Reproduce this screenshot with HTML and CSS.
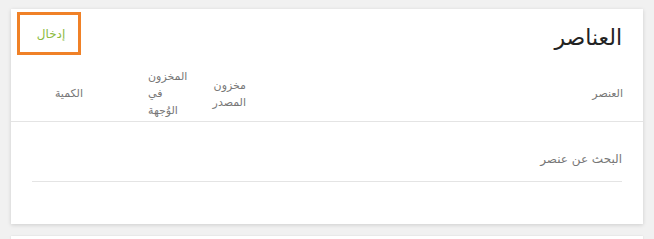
FILE: index.html
```html
<!DOCTYPE html>
<html lang="ar" dir="rtl">
<head>
    <meta charset="UTF-8">
    <title>العناصر</title>
    <link rel="stylesheet" href="styles.css">
</head>
<body>
    <div class="card">
        <div class="card-head">
            <h2 class="title">العناصر</h2>
            <button class="btn-enter">إدخال</button>
        </div>

        <div class="table-head">
            <div class="th col-item">العنصر</div>
            <div class="th col-src"><span>مخزون المصدر</span></div>
            <div class="th col-dst"><span>المخزون في الوُجهة</span></div>
            <div class="th col-qty">الكمية</div>
        </div>

        <div class="search">
            <input class="search-input" type="text" placeholder="البحث عن عنصر">
        </div>
    </div>

    <div class="card card-next"></div>
</body>
</html>
```

FILE: styles.css
```css
html, body {
    height: 100%;
    overflow: hidden;
}

body {
    margin: 0;
    background-color: #f1f1f1;
    font-family: 'DejaVu Sans', sans-serif;
    direction: rtl;
    padding: 9px 11px 0 11px;
    box-sizing: border-box;
}

.card {
    background-color: #fff;
    box-shadow: 0 1px 4px rgba(0, 0, 0, 0.15);
    height: 215px;
}

.card-next {
    margin-top: 12px;
    height: 40px;
    box-shadow: 0 0 2px rgba(0, 0, 0, 0.1);
}

.card-head {
    display: flex;
    justify-content: space-between;
    align-items: flex-start;
    padding: 0 21px 0 6px;
    height: 57px;
}

.title {
    margin: 14px 0 0 0;
    font-size: 22px;
    font-weight: normal;
    color: #222;
    line-height: 30px;
}

.btn-enter {
    margin-top: 3px;
    width: 64px;
    height: 43px;
    border: 3px solid #f08127;
    background: #fff;
    color: #8bbb3f;
    font-family: 'DejaVu Sans', sans-serif;
    font-size: 12px;
    padding: 0 0 0 4px;
}

.table-head {
    display: grid;
    grid-template-columns: 377px 57px 106px 1fr;
    align-items: center;
    border-bottom: 1px solid #e4e4e4;
    height: 55px;
}

.th {
    padding-right: 20px;
    font-size: 11px;
    line-height: 17px;
    color: #777;
}

.th span {
    display: block;
}

.col-src span {
    max-width: 40px;
}

.col-dst span {
    width: 41px;
    text-align: left;
}

.search {
    padding: 25px 21px 0 21px;
}

.search-input {
    width: 100%;
    box-sizing: border-box;
    border: 0;
    border-bottom: 1px solid #e4e4e4;
    font-family: 'DejaVu Sans', sans-serif;
    font-size: 12px;
    padding: 5px 0 15px 0;
    outline: none;
    background: transparent;
}

.search-input::placeholder {
    color: #777;
}
```
